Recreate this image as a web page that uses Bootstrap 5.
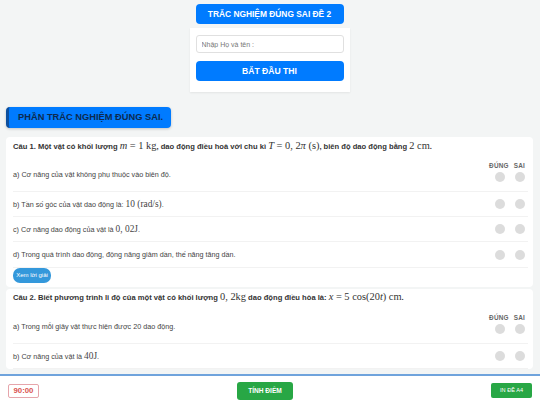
<!DOCTYPE html>
<html lang="vi">
<head>
<meta charset="utf-8">
<title>Trắc nghiệm đúng sai</title>
<link rel="stylesheet" href="https://cdn.jsdelivr.net/npm/bootstrap@5.3.0/dist/css/bootstrap.min.css">
<style>
html,body{height:405px;overflow:hidden}
body{background:#f3f5f5;font-family:"Liberation Sans",Arial,sans-serif;color:#333;padding:4px 7px 0 6px}
.exam-title{width:148px;height:20px;background:#007bff;color:#fff;font-size:8.4px;font-weight:700;border-radius:4px;line-height:20px;white-space:nowrap}
.start-box{width:160px;height:64px;background:#fff;margin-top:4px;padding:7px 6px 0;box-shadow:0 1px 2px rgba(0,0,0,.07)}
.name-input{height:18px;min-height:18px;font-size:7px;padding:0 5px;border-radius:3px;border-color:#e0e0e0;color:#777}
.name-input::placeholder{color:#777}
.start-btn{height:20px;margin-top:8px;padding:0;background:#007bff;border:0;font-size:8.6px;font-weight:700;border-radius:4px;color:#fff}
.part-head{width:165px;height:21px;margin-top:15px;background:#007bff;color:#0d2a4f;font-size:9.3px;font-weight:700;line-height:21px;border-radius:4px;border-left:3px solid #0c4f9e;padding-left:9px;box-shadow:0 1px 3px rgba(0,0,0,.2);white-space:nowrap}
.qbox{background:#fff;border-radius:4px;padding:0 5px 0 7px;margin-top:9px}
.qbox + .qbox{margin-top:2px}
.qtext{font-size:7.6px;font-weight:700;color:#333;padding-top:3px;height:20px;line-height:12px;white-space:nowrap}
.qbox + .qbox .qtext{padding-top:2px}
.mth{font-family:"Liberation Serif",serif;font-weight:400;font-size:10.4px}
.mth i{font-style:italic}
.opt{border-bottom:1px solid #f2f2f2;font-size:7.2px;color:#444}
.opt-plain{height:25px}
.opt-first{height:35px}
.opt-last{height:26px}
.opt-txt{flex:1;line-height:10px;min-width:0}
.opt-first .opt-txt{padding-top:2px}
.opt-txt .mth{font-size:9.4px}
.marks{gap:10px;margin-right:3px}
.dot{width:10px;height:10px;border-radius:50%;background:#dcdcdc;flex:none}
.mark-col{padding-bottom:3px;margin-top:-2px}
.heads{font-size:6.4px;font-weight:700;color:#666;gap:5px;margin-right:3px;line-height:8px;margin-top:1px;margin-bottom:2px;letter-spacing:.2px}
.answer-btn{font-size:6px;color:#fff;background:#3498db;border:0;border-radius:7px;height:15px;width:38px;padding:0;display:block;margin:0}
.answer-wrap{padding-bottom:4px}
.bottom-bar{position:fixed;left:0;right:0;bottom:0;height:31px;background:#fff;border-top:2px solid #6fa3dc;padding:0 8px}
.timer{width:31px;height:14px;border:1px solid #e6a5ab;border-radius:2px;color:#d9534f;font-size:7.8px;font-weight:700;line-height:12px;text-align:center;background:#fff}
.score-btn{width:56px;height:18px;padding:0;background:#28a745;border:0;color:#fff;font-size:6.6px;font-weight:700;border-radius:3px}
.print-btn{width:41px;height:15px;padding:0;background:#28a745;border:0;color:#fff;font-size:5.6px;font-weight:400;border-radius:2px}
</style>
</head>
<body>
<div class="d-flex flex-column align-items-center">
  <div class="exam-title text-center">TRẮC NGHIỆM ĐÚNG SAI ĐỀ 2</div>
  <div class="start-box">
    <input class="form-control name-input" placeholder="Nhập Họ và tên :">
    <button class="btn start-btn w-100">BẮT ĐẦU THI</button>
  </div>
</div>
<div class="part-head">PHẦN TRẮC NGHIỆM ĐÚNG SAI.</div>

<div class="qbox">
  <div class="qtext">Câu 1. Một vật có khối lượng <span class="mth"><i>m</i> = 1 kg</span>, dao động điều hoà với chu kì <span class="mth"><i>T</i> = 0, 2<i>π</i> (s)</span>, biên độ dao động bằng <span class="mth">2 cm</span>.</div>
  <div class="opt opt-first d-flex align-items-center">
    <div class="opt-txt">a) Cơ năng của vật không phụ thuộc vào biên độ.</div>
    <div class="mark-col d-flex flex-column align-items-end">
      <div class="d-flex heads"><span>ĐÚNG</span><span>SAI</span></div>
      <div class="d-flex marks"><span class="dot"></span><span class="dot"></span></div>
    </div>
  </div>
  <div class="opt opt-plain d-flex align-items-center">
    <div class="opt-txt">b) Tần số góc của vật dao động là: <span class="mth">10 (rad/s)</span>.</div>
    <div class="d-flex marks"><span class="dot"></span><span class="dot"></span></div>
  </div>
  <div class="opt opt-plain d-flex align-items-center">
    <div class="opt-txt">c) Cơ năng dao động của vật là <span class="mth">0, 02J</span>.</div>
    <div class="d-flex marks"><span class="dot"></span><span class="dot"></span></div>
  </div>
  <div class="opt opt-last d-flex align-items-center">
    <div class="opt-txt">d) Trong quá trình dao động, động năng giảm dần, thế năng tăng dần.</div>
    <div class="d-flex marks"><span class="dot"></span><span class="dot"></span></div>
  </div>
  <div class="answer-wrap"><button class="btn answer-btn">Xem lời giải</button></div>
</div>

<div class="qbox">
  <div class="qtext">Câu 2. Biết phương trình li độ của một vật có khối lượng <span class="mth">0, 2kg</span> dao động điều hòa là: <span class="mth"><i>x</i> = 5 cos(20<i>t</i>) cm</span>.</div>
  <div class="opt opt-first d-flex align-items-center">
    <div class="opt-txt">a) Trong mỗi giây vật thực hiện được 20 dao động.</div>
    <div class="mark-col d-flex flex-column align-items-end">
      <div class="d-flex heads"><span>ĐÚNG</span><span>SAI</span></div>
      <div class="d-flex marks"><span class="dot"></span><span class="dot"></span></div>
    </div>
  </div>
  <div class="opt opt-plain d-flex align-items-center">
    <div class="opt-txt">b) Cơ năng của vật là <span class="mth">40J</span>.</div>
    <div class="d-flex marks"><span class="dot"></span><span class="dot"></span></div>
  </div>
</div>

<div class="bottom-bar d-flex align-items-center justify-content-between">
  <div class="timer">90:00</div>
  <button class="btn score-btn">TÍNH ĐIỂM</button>
  <button class="btn print-btn">IN ĐỀ A4</button>
</div>
</body>
</html>
